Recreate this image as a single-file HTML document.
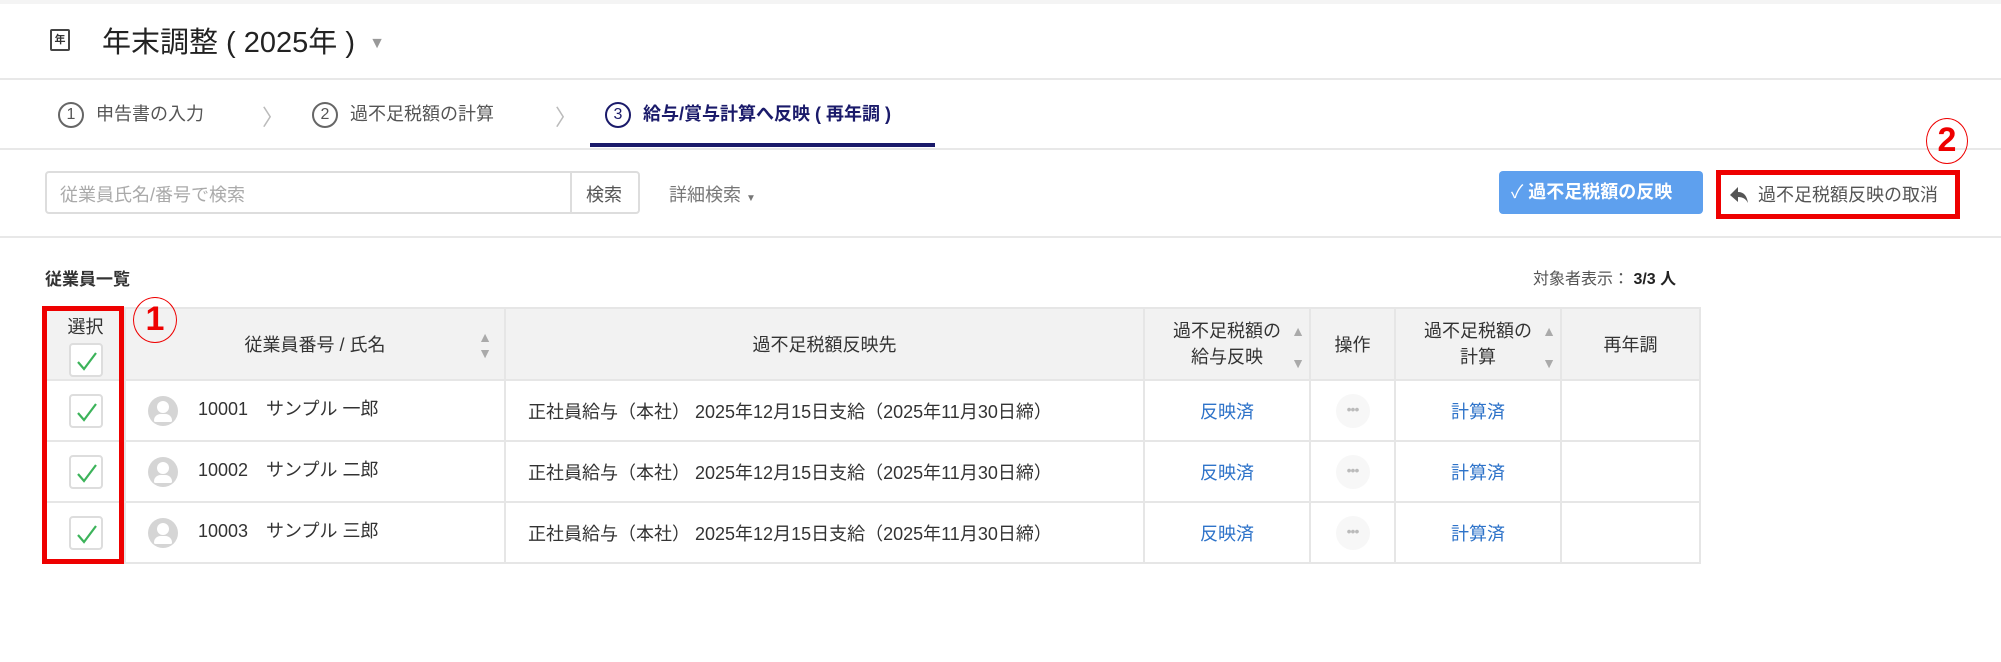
<!DOCTYPE html>
<html><head><meta charset="utf-8"><style>
*{box-sizing:border-box;margin:0;padding:0}
body{width:2001px;height:662px;background:#fff;font-family:"Liberation Sans","Noto Sans CJK JP",sans-serif;color:#333;position:relative;overflow:hidden}
.a{position:absolute;white-space:nowrap}
.hl{position:absolute;left:0;width:2001px;height:2px;background:#e8e8e8}
.circ{display:inline-block;width:26px;height:26px;border:2px solid #666;border-radius:50%;text-align:center;line-height:22px;font-size:16px;margin-right:12px;vertical-align:middle}
table{position:absolute;left:45px;top:307px;border-collapse:collapse;font-size:18px}
td,th{border:2px solid #e6e6e6;text-align:center}
th{background:#f2f2f2;font-weight:normal;color:#333;height:72px}
td{height:61px}
.cb{display:inline-block;width:34px;height:34px;border:2px solid #ddd;border-radius:4px;position:relative;vertical-align:middle;background:#fff}
.cb svg{position:absolute;left:3px;top:3px}
.blue{color:#2e73c9}
.av{display:inline-block;width:30px;height:30px;border-radius:50%;background:#d5d5d5;vertical-align:middle;margin-right:20px;position:relative}
.av:before{content:"";position:absolute;left:9px;top:5px;width:12px;height:12px;border-radius:50%;background:#fff}
.av:after{content:"";position:absolute;left:6px;top:18px;width:18px;height:8px;border-radius:9px 9px 2px 2px;background:#fff}
.dots{display:inline-block;width:34px;height:34px;border-radius:50%;background:#f7f7f7;color:#bbb;font-size:14px;line-height:30px;letter-spacing:-1px}
.sort{position:absolute;right:12px;top:20px;color:#aaa;font-size:14px;line-height:16px}
.rc{position:absolute;border-radius:50%;border:1.5px solid #e00;color:#e00;text-align:center;font-weight:bold}
</style></head><body>
<div class="hl" style="top:0;background:#f4f4f4;height:4px"></div>
<div class="a" style="left:50px;top:29px;width:20px;height:22px;border:2px solid #444;border-radius:2px;font-size:11px;text-align:center;line-height:18px;font-weight:bold">年</div>
<div class="a" style="left:102px;top:19px;font-size:29px;color:#222">年末調整 ( 2025年 ) <span style="color:#999;font-size:16px;vertical-align:middle;margin-left:6px">▼</span></div>
<div class="hl" style="top:78px"></div>
<div class="a" style="left:58px;top:100px;font-size:18px;color:#555"><span class="circ">1</span>申告書の入力</div>
<div class="a" style="left:262px;top:100px;font-size:22px;color:#bbb">〉</div>
<div class="a" style="left:312px;top:100px;font-size:18px;color:#555"><span class="circ">2</span>過不足税額の計算</div>
<div class="a" style="left:555px;top:100px;font-size:22px;color:#bbb">〉</div>
<div class="a" style="left:605px;top:100px;font-size:18px;color:#1a1a6a;font-weight:bold"><span class="circ" style="border-color:#1a1a6a;font-weight:normal">3</span>給与/賞与計算へ反映 ( 再年調 )</div>
<div class="a" style="left:590px;top:143px;width:345px;height:4px;background:#1a1a6a"></div>
<div class="hl" style="top:148px"></div>
<div class="a" style="left:45px;top:171px;width:595px;height:43px;border:2px solid #ddd;border-radius:4px"></div>
<div class="a" style="left:60px;top:181px;font-size:18px;color:#aaa">従業員氏名/番号で検索</div>
<div class="a" style="left:570px;top:171px;width:2px;height:43px;background:#ddd"></div>
<div class="a" style="left:586px;top:181px;font-size:18px;color:#555">検索</div>
<div class="a" style="left:669px;top:181px;font-size:18px;color:#777">詳細検索 <span style="font-size:10px">▼</span></div>
<div class="a" style="left:1499px;top:171px;width:204px;height:43px;background:#5ea0ee;border-radius:4px;color:#fff;font-size:18px;font-weight:bold;line-height:43px;padding-left:12px"><span style="font-weight:normal">✓</span> 過不足税額の反映</div>
<div class="a" style="left:1716px;top:170px;width:244px;height:49px;border:5px solid #e00"></div>
<svg class="a" style="left:1729px;top:184px" width="20" height="20"><path d="M9 3 L1 11 L9 18 L9 13 C14 13 17 15 19 19 C18 12 15 8 9 8 Z" fill="#555"/></svg>
<div class="a" style="left:1758px;top:181px;font-size:18px;color:#555">過不足税額反映の取消</div>
<div class="rc" style="left:1926px;top:118px;width:42px;height:46px;font-size:34px;line-height:42px">2</div>
<div class="hl" style="top:236px"></div>
<div class="a" style="left:45px;top:265px;font-size:17px;font-weight:bold;color:#333">従業員一覧</div>
<div class="a" style="left:1533px;top:265px;font-size:16px;color:#555">対象者表示： <b style="color:#222">3/3 人</b></div>
<table>
<tr><th style="width:79px;vertical-align:top;padding-top:4px">選択<br><span class="cb" style="margin-top:4px"><svg width="26" height="26"><path d="M4 14 L10 21 L22 5" stroke="#3cb35a" stroke-width="2.2" fill="none"/></svg></span></th>
<th style="width:380px;position:relative">従業員番号 / 氏名<span class="sort">▲<br>▼</span></th>
<th style="width:639px">過不足税額反映先</th>
<th style="width:166px;position:relative;line-height:26px">過不足税額の<br>給与反映<span class="sort" style="right:4px;top:14px">▲<br><br>▼</span></th>
<th style="width:85px">操作</th>
<th style="width:166px;position:relative;line-height:26px">過不足税額の<br>計算<span class="sort" style="right:4px;top:14px">▲<br><br>▼</span></th>
<th style="width:139px">再年調</th></tr>
<tr><td><span class="cb"><svg width="26" height="26"><path d="M4 14 L10 21 L22 5" stroke="#3cb35a" stroke-width="2.2" fill="none"/></svg></span></td><td style="text-align:left;padding-left:22px"><span class="av"></span>10001　サンプル 一郎</td><td style="text-align:left;padding-left:22px">正社員給与（本社） 2025年12月15日支給（2025年11月30日締）</td><td class="blue">反映済</td><td><span class="dots">•••</span></td><td class="blue">計算済</td><td></td></tr>
<tr><td><span class="cb"><svg width="26" height="26"><path d="M4 14 L10 21 L22 5" stroke="#3cb35a" stroke-width="2.2" fill="none"/></svg></span></td><td style="text-align:left;padding-left:22px"><span class="av"></span>10002　サンプル 二郎</td><td style="text-align:left;padding-left:22px">正社員給与（本社） 2025年12月15日支給（2025年11月30日締）</td><td class="blue">反映済</td><td><span class="dots">•••</span></td><td class="blue">計算済</td><td></td></tr>
<tr><td><span class="cb"><svg width="26" height="26"><path d="M4 14 L10 21 L22 5" stroke="#3cb35a" stroke-width="2.2" fill="none"/></svg></span></td><td style="text-align:left;padding-left:22px"><span class="av"></span>10003　サンプル 三郎</td><td style="text-align:left;padding-left:22px">正社員給与（本社） 2025年12月15日支給（2025年11月30日締）</td><td class="blue">反映済</td><td><span class="dots">•••</span></td><td class="blue">計算済</td><td></td></tr>
</table>
<div class="a" style="left:42px;top:306px;width:82px;height:258px;border:5px solid #e00"></div>
<div class="rc" style="left:133px;top:297px;width:44px;height:46px;font-size:34px;line-height:42px">1</div>
</body></html>
